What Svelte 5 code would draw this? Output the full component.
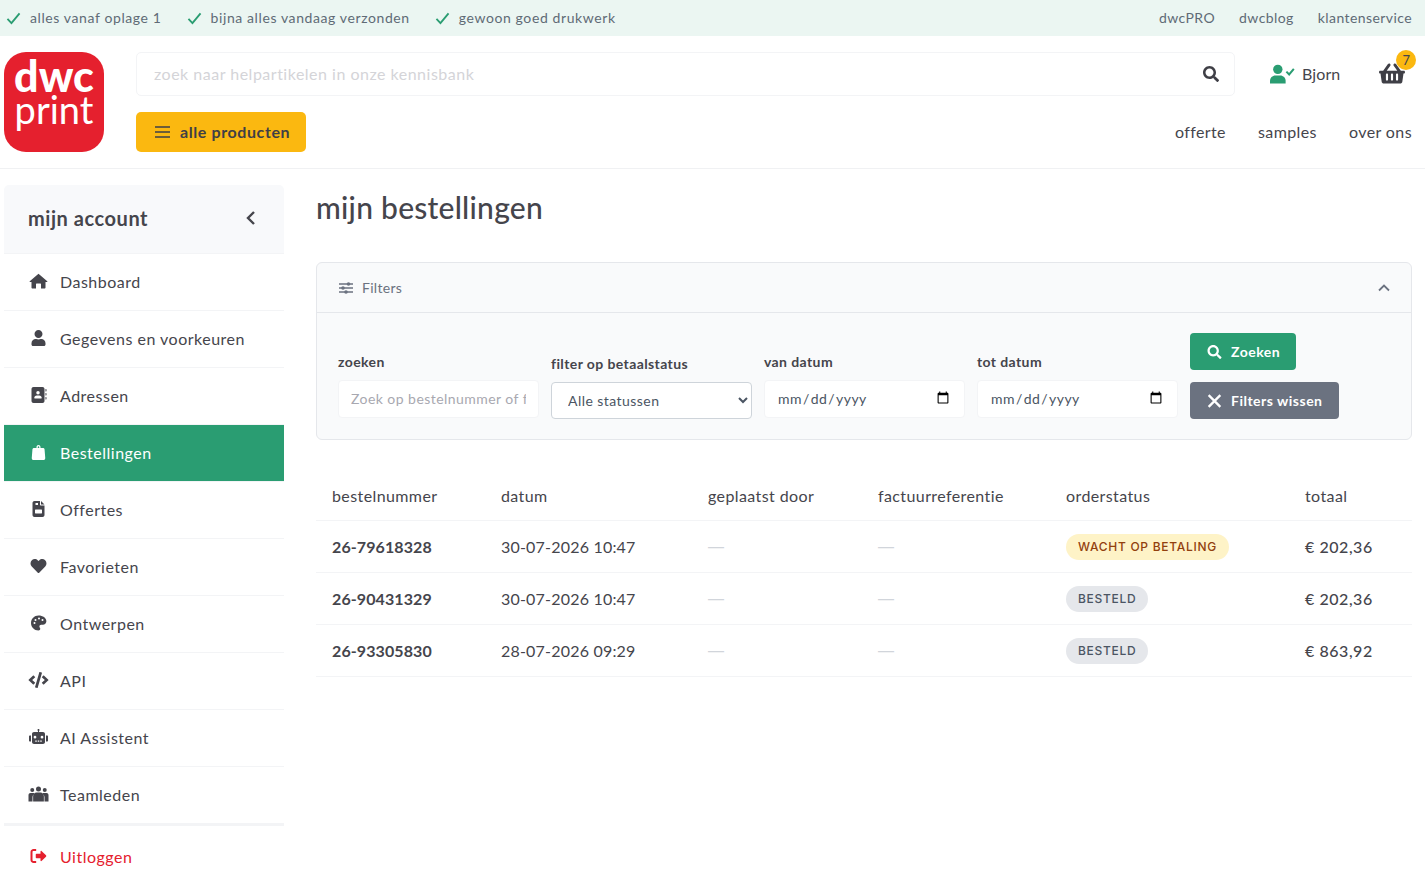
<script>
  const topLeft = ["alles vanaf oplage 1", "bijna alles vandaag verzonden", "gewoon goed drukwerk"];
  const topRight = ["dwcPRO", "dwcblog", "klantenservice"];

  const icons = {
    home: ["0 0 576 512", "M288 24 L8 264 c-10 9 -4 24 10 24 h46 v176 c0 18 14 32 32 32 h112 V352 c0 -10 8 -18 18 -18 h124 c10 0 18 8 18 18 v144 h112 c18 0 32 -14 32 -32 V288 h46 c14 0 20 -15 10 -24 L288 24z"],
    user: ["0 0 448 512", "M224 256c70.7 0 128-57.3 128-128S294.7 0 224 0 96 57.3 96 128s57.3 128 128 128zm89.6 32h-16.7c-22.2 10.2-46.9 16-72.9 16s-50.6-5.8-72.9-16h-16.7C60.2 288 0 348.2 0 422.4V464c0 26.5 21.5 48 48 48h352c26.5 0 48-21.5 48-48v-41.6c0-74.2-60.2-134.4-134.4-134.4z"],
    book: ["0 0 512 512", "M96 0h288c35 0 64 29 64 64v384c0 35-29 64-64 64H96c-35 0-64-29-64-64V64C32 29 61 0 96 0zm144 128a56 56 0 1 0 0 112 56 56 0 0 0 0-112zm-40 144c-44 0-80 36-80 80 0 9 7 16 16 16h208c9 0 16-7 16-16 0-44-36-80-80-80h-80zM480 64h16c9 0 16 7 16 16v48c0 9-7 16-16 16h-16V64zm0 128h16c9 0 16 7 16 16v48c0 9-7 16-16 16h-16v-80zm0 128h16c9 0 16 7 16 16v48c0 9-7 16-16 16h-16v-80z"],
    bag: ["0 0 448 512", "M160 128V96c0-35 29-64 64-64s64 29 64 64v32h-40V96c0-13-11-24-24-24s-24 11-24 24v32h-40zm-80 0h288c26 0 48 20 50 46l22 272c3 36-25 66-60 66H68c-35 0-63-30-60-66l22-272c2-26 24-46 50-46z"],
    file: ["0 0 384 512", "M64 0h176v112c0 18 14 32 32 32h112v304c0 35-29 64-64 64H64c-35 0-64-29-64-64V64C0 29 29 0 64 0zm208 0l112 112H272V0zM96 64v64h80V64H96zm0 208c-9 0-16 7-16 16v96c0 9 7 16 16 16h192c9 0 16-7 16-16v-96c0-9-7-16-16-16H96z"],
    heart: ["0 0 512 512", "M462.3 62.6C407.5 15.9 326 24.3 275.7 76.2L256 96.5l-19.7-20.3C186.1 24.3 104.5 15.9 49.7 62.6c-62.8 53.6-66.1 149.8-9.9 207.9l193.5 199.8c12.5 12.9 32.8 12.9 45.3 0l193.5-199.8c56.3-58.1 53-154.3-9.8-207.9z"],
    palette: ["0 0 512 512", "M256 16C123 16 16 123 16 256s107 240 240 240c32 0 56-24 56-56 0-14-5-26-14-36-9-10-14-22-14-36 0-31 25-56 56-56h56c61 0 112-51 112-112C508 93 395 16 256 16zM128 288a32 32 0 1 1 0-64 32 32 0 0 1 0 64zm32-96a32 32 0 1 1 0-64 32 32 0 0 1 0 64zm112-48a32 32 0 1 1 0-64 32 32 0 0 1 0 64zm112 48a32 32 0 1 1 0-64 32 32 0 0 1 0 64z"],
    code: ["0 0 640 512", "M278.9 511.5l-61-17.7c-6.4-1.8-10-8.5-8.2-14.9L346.2 8.7c1.8-6.4 8.5-10 14.9-8.2l61 17.7c6.4 1.8 10 8.5 8.2 14.9L293.8 503.3c-1.9 6.4-8.5 10.1-14.9 8.2zm-114-112.2l43.5-46.4c4.6-4.9 4.3-12.7-.8-17.2L117 256l90.6-79.7c5.1-4.5 5.5-12.3.8-17.2l-43.5-46.4c-4.5-4.8-12.1-5.1-17-.5L3.8 247.2c-5.1 4.7-5.1 12.8 0 17.5l144.1 135.1c4.9 4.6 12.5 4.4 17-.5zm327.2.6l144.1-135.1c5.1-4.7 5.1-12.8 0-17.5L492.1 112.1c-4.8-4.5-12.4-4.3-17 .5L431.6 159c-4.6 4.9-4.3 12.7.8 17.2L523 256l-90.6 79.7c-5.1 4.5-5.5 12.3-.8 17.2l43.5 46.4c4.5 4.9 12.1 5.1 17 .6z"],
    robot: ["0 0 640 512", "M320 0c18 0 32 14 32 32 0 12-6 22-16 28v36h128c35 0 64 29 64 64v256c0 35-29 64-64 64H176c-35 0-64-29-64-64V160c0-35 29-64 64-64h128V60c-10-6-16-16-16-28 0-18 14-32 32-32zM208 216a44 44 0 1 0 0 88 44 44 0 0 0 0-88zm224 0a44 44 0 1 0 0 88 44 44 0 0 0 0-88zM216 368v40h48v-40h-48zm80 0v40h48v-40h-48zm80 0v40h48v-40h-48zM80 208v192H48c-18 0-32-14-32-32V240c0-18 14-32 32-32h32zm480 0h32c18 0 32 14 32 32v128c0 18-14 32-32 32h-32V208z"],
    users: ["0 0 640 512", "M320 16a80 80 0 1 1 0 160 80 80 0 0 1 0-160zM120 64a64 64 0 1 1 0 128 64 64 0 0 1 0-128zm400 0a64 64 0 1 1 0 128 64 64 0 0 1 0-128zM64 224h88c17 0 33 5 46 13-42 25-70 70-70 123v136H0V288c0-35 29-64 64-64zm424 0h88c35 0 64 29 64 64v208H512V360c0-53-28-98-70-123 13-8 29-13 46-13zM260 208h120c62 0 112 50 112 112v176H148V320c0-62 50-112 112-112z"],
    logout: ["0 0 512 512", "M352 96l144 136c14 13 14 35 0 48L352 416c-10 9-32 4-32-16v-72H192c-13 0-24-11-24-24v-96c0-13 11-24 24-24h128v-72c0-20 22-25 32-16zM96 32h72c9 0 16 7 16 16v32c0 9-7 16-16 16H96c-18 0-32 14-32 32v256c0 18 14 32 32 32h72c9 0 16 7 16 16v32c0 9-7 16-16 16H96c-53 0-96-43-96-96V128c0-53 43-96 96-96z"],
    search: ["0 0 512 512", "M505 442.7L405.3 343c-4.5-4.5-10.6-7-17-7H372c27.6-35.3 44-79.7 44-128C416 93.1 322.9 0 208 0S0 93.1 0 208s93.1 208 208 208c48.3 0 92.7-16.4 128-44v16.3c0 6.4 2.5 12.5 7 17l99.7 99.7c9.4 9.4 24.6 9.4 33.9 0l28.3-28.3c9.4-9.4 9.4-24.6.1-34zM208 336c-70.7 0-128-57.2-128-128 0-70.7 57.2-128 128-128 70.7 0 128 57.2 128 128 0 70.7-57.2 128-128 128z"],
    basket: ["0 0 576 512", "M576 216v16c0 13.255-10.745 24-24 24h-8l-26.113 182.788C514.509 462.435 494.257 480 470.37 480H105.63c-23.887 0-44.139-17.565-47.518-41.212L32 256h-8c-13.255 0-24-10.745-24-24v-16c0-13.255 10.745-24 24-24h67.341l106.78-146.821c10.395-14.292 30.407-17.453 44.701-7.058 14.293 10.395 17.453 30.408 7.058 44.701L170.477 192h235.046L326.12 82.821c-10.395-14.292-7.234-34.306 7.059-44.701 14.291-10.395 34.306-7.235 44.701 7.058L484.659 192H552c13.255 0 24 10.745 24 24zM312 392V280c0-13.255-10.745-24-24-24s-24 10.745-24 24v112c0 13.255 10.745 24 24 24s24-10.745 24-24zm112 0V280c0-13.255-10.745-24-24-24s-24 10.745-24 24v112c0 13.255 10.745 24 24 24s24-10.745 24-24zm-224 0V280c0-13.255-10.745-24-24-24s-24 10.745-24 24v112c0 13.255 10.745 24 24 24s24-10.745 24-24z"],
  };

  const menu = [
    { label: "Dashboard", icon: "home" },
    { label: "Gegevens en voorkeuren", icon: "user" },
    { label: "Adressen", icon: "book" },
    { label: "Bestellingen", icon: "bag", active: true },
    { label: "Offertes", icon: "file" },
    { label: "Favorieten", icon: "heart" },
    { label: "Ontwerpen", icon: "palette" },
    { label: "API", icon: "code" },
    { label: "AI Assistent", icon: "robot" },
    { label: "Teamleden", icon: "users" },
  ];

  const orders = [
    { nr: "26-79618328", date: "30-07-2026 10:47", status: "WACHT OP BETALING", wait: true, total: "€ 202,36" },
    { nr: "26-90431329", date: "30-07-2026 10:47", status: "BESTELD", total: "€ 202,36" },
    { nr: "26-93305830", date: "28-07-2026 09:29", status: "BESTELD", total: "€ 863,92" },
  ];
</script>

{#snippet icon(name, cls)}
  <svg class={cls} viewBox={icons[name][0]} aria-hidden="true"><path fill="currentColor" fill-rule="evenodd" d={icons[name][1]} /></svg>
{/snippet}

{#snippet check()}
  <svg class="check" viewBox="0 0 16 14" aria-hidden="true"><path d="M1.5 7.5 L5.8 12 L14.5 1.5" fill="none" stroke="currentColor" stroke-width="2" /></svg>
{/snippet}

<div class="page">
  <div class="topbar">
    <ul class="usps">
      {#each topLeft as usp}
        <li>{@render check()}<span>{usp}</span></li>
      {/each}
    </ul>
    <nav class="toplinks">
      {#each topRight as link}<span>{link}</span>{/each}
    </nav>
  </div>

  <header class="header">
    <div class="logo">
      <span class="logo__dwc">dwc</span>
      <span class="logo__print">print</span>
    </div>
    <div class="header__body">
      <div class="header__row">
        <div class="search">
          <input type="text" placeholder="zoek naar helpartikelen in onze kennisbank" />
          {@render icon("search", "search__icon")}
        </div>
        <div class="account">
          <svg class="account__icon" viewBox="0 0 32 24" aria-hidden="true">
            <circle cx="10" cy="6" r="6" fill="#2a9d72" />
            <path d="M0 24v-3c0-4 3-7 7-7h6c4 0 7 3 7 7v3z" fill="#2a9d72" />
            <path d="M21 9l3.5 3.5 6-7" fill="none" stroke="#2a9d72" stroke-width="2.6" />
          </svg>
          <span>Bjorn</span>
        </div>
        <div class="cart">
          {@render icon("basket", "cart__icon")}
          <span class="cart__badge">7</span>
        </div>
      </div>
      <div class="header__row header__row--nav">
        <button class="products">
          <svg class="products__icon" viewBox="0 0 15 12" aria-hidden="true"><path d="M0 1h15M0 6h15M0 11h15" stroke="currentColor" stroke-width="1.5" /></svg>
          alle producten
        </button>
        <nav class="mainnav">
          <span>offerte</span><span>samples</span><span>over ons</span>
        </nav>
      </div>
    </div>
  </header>

  <div class="layout">
    <aside class="sidebar">
      <div class="sidebar__head">
        <h2>mijn account</h2>
        <svg class="sidebar__back" viewBox="0 0 10 16" aria-hidden="true"><path d="M8 2 L2 8 L8 14" fill="none" stroke="currentColor" stroke-width="2.4" /></svg>
      </div>
      <ul class="menu">
        {#each menu as item}
          <li class="menu__item" class:menu__item--active={item.active}>
            <span class="menu__icon">{@render icon(item.icon, "menu__svg")}</span>
            {item.label}
          </li>
        {/each}
      </ul>
      <div class="logout">
        <span class="menu__icon">{@render icon("logout", "menu__svg")}</span>
        Uitloggen
      </div>
    </aside>

    <main class="main">
      <h1>mijn bestellingen</h1>

      <section class="filters">
        <div class="filters__head">
          <svg class="filters__icon" viewBox="0 0 14 12" aria-hidden="true">
            <path d="M0 2h14M0 6h14M0 10h14" stroke="currentColor" stroke-width="1.4" />
            <circle cx="9.5" cy="2" r="1.8" fill="currentColor" /><circle cx="4" cy="6" r="1.8" fill="currentColor" /><circle cx="7" cy="10" r="1.8" fill="currentColor" />
          </svg>
          <span>Filters</span>
          <svg class="filters__toggle" viewBox="0 0 12 8" aria-hidden="true"><path d="M1 6.5 L6 1.5 L11 6.5" fill="none" stroke="currentColor" stroke-width="1.8" /></svg>
        </div>
        <form class="filters__form">
          <label class="field">
            <span class="field__label">zoeken</span>
            <input class="field__input" type="text" placeholder="Zoek op bestelnummer of factuurreferentie" />
          </label>
          <label class="field field--select">
            <span class="field__label">filter op betaalstatus</span>
            <select class="field__select"><option>Alle statussen</option></select>
          </label>
          <label class="field">
            <span class="field__label">van datum</span>
            <input class="field__input field__input--date" type="date" />
          </label>
          <label class="field">
            <span class="field__label">tot datum</span>
            <input class="field__input field__input--date" type="date" />
          </label>
          <div class="filters__actions">
            <button type="button" class="btn btn--green">{@render icon("search", "btn__icon")}Zoeken</button>
            <button type="button" class="btn btn--grey">
              <svg class="btn__icon" viewBox="0 0 12 12" aria-hidden="true"><path d="M1 1l10 10M11 1L1 11" stroke="currentColor" stroke-width="2" /></svg>
              Filters wissen
            </button>
          </div>
        </form>
      </section>

      <table class="orders">
        <colgroup>
          <col style="width:169px" /><col style="width:207px" /><col style="width:170px" /><col style="width:188px" /><col style="width:239px" /><col />
        </colgroup>
        <thead>
          <tr><th>bestelnummer</th><th>datum</th><th>geplaatst door</th><th>factuurreferentie</th><th>orderstatus</th><th>totaal</th></tr>
        </thead>
        <tbody>
          {#each orders as order}
            <tr>
              <td class="orders__nr">{order.nr}</td>
              <td>{order.date}</td>
              <td class="orders__none">—</td>
              <td class="orders__none">—</td>
              <td><span class="badge" class:badge--wait={order.wait}>{order.status}</span></td>
              <td class="orders__total">{order.total}</td>
            </tr>
          {/each}
        </tbody>
      </table>
    </main>
  </div>
</div>

<style>
  :global(body) {
    margin: 0;
    background: #fff;
    color: #45454c;
    font-family: "Lato", "Liberation Sans", sans-serif;
  }

  ul {
    list-style: none;
    margin: 0;
    padding: 0;
  }

  .topbar {
    display: flex;
    justify-content: space-between;
    align-items: center;
    box-sizing: border-box;
    height: 36px;
    padding: 0 13px 2px 6px;
    background: #ebf6f2;
    font-size: 14px;
    color: #5f6b76;
    letter-spacing: 0.6px;
  }

  .usps {
    display: flex;
    gap: 25px;
  }

  .usps li {
    display: flex;
    align-items: center;
    gap: 9px;
  }

  .check {
    width: 15px;
    height: 13px;
    margin-top: 2px;
    color: #2a9d72;
  }

  .toplinks {
    display: flex;
    gap: 24px;
    letter-spacing: 0.42px;
  }

  .header {
    display: flex;
    gap: 32px;
    padding: 16px 13px 16px 4px;
    border-bottom: 1px solid #f0f1f3;
  }

  .logo {
    display: flex;
    flex-direction: column;
    align-items: center;
    justify-content: center;
    flex: none;
    box-sizing: border-box;
    width: 100px;
    height: 100px;
    padding-bottom: 20px;
    border-radius: 22px;
    background: #e5202e;
    color: #fff;
  }

  .logo__dwc {
    font-size: 43px;
    font-weight: 900;
    line-height: 34px;
  }

  .logo__print {
    font-size: 38px;
    font-weight: 400;
    line-height: 32px;
  }

  .header__body {
    flex: 1;
    display: flex;
    flex-direction: column;
    gap: 16px;
  }

  .header__row {
    display: flex;
    align-items: center;
    height: 44px;
  }

  .header__row--nav {
    justify-content: space-between;
    height: 40px;
  }

  .search {
    display: flex;
    align-items: center;
    flex: none;
    width: 1099px;
    height: 44px;
    box-sizing: border-box;
    border: 1px solid #f3f4f6;
    border-radius: 5px;
    padding: 0 15px 0 17px;
  }

  .search input {
    flex: 1;
    border: 0;
    outline: 0;
    padding: 0 0 2px;
    font: inherit;
    font-size: 16px;
    letter-spacing: 0.5px;
  }

  .search input::placeholder {
    color: #d4d4d8;
  }

  :global(.search__icon) {
    width: 16px;
    height: 16px;
    color: #3f3f46;
  }

  .account {
    display: flex;
    align-items: center;
    gap: 7px;
    margin-left: 35px;
    font-size: 16px;
    letter-spacing: 0.1px;
  }

  .account span {
    padding-bottom: 2px;
  }

  .account__icon {
    width: 25px;
    height: 20px;
  }

  .cart {
    position: relative;
    margin-left: 39px;
    height: 24px;
  }

  :global(.cart__icon) {
    display: block;
    width: 26px;
    height: 23px;
    color: #3f3f46;
  }

  .cart__badge {
    position: absolute;
    top: -12px;
    right: -11px;
    width: 20px;
    height: 20px;
    border-radius: 50%;
    background: #fbb810;
    font-size: 13px;
    line-height: 20px;
    text-align: center;
  }

  .products {
    display: flex;
    align-items: center;
    gap: 10px;
    width: 170px;
    height: 40px;
    padding: 0 0 2px 19px;
    border: 0;
    border-radius: 5px;
    background: #fbb810;
    color: #3f3f46;
    font: inherit;
    font-size: 16px;
    font-weight: 700;
    letter-spacing: 0.6px;
  }

  .products__icon {
    width: 15px;
    height: 12px;
    margin-top: 2px;
  }

  .mainnav {
    display: flex;
    gap: 32px;
    padding-bottom: 2px;
    font-size: 16px;
    letter-spacing: 0.4px;
  }

  .layout {
    display: flex;
    gap: 32px;
    padding: 16px 13px 0 4px;
  }

  .sidebar {
    flex: none;
    width: 280px;
  }

  .sidebar__head {
    display: flex;
    align-items: center;
    justify-content: space-between;
    box-sizing: border-box;
    height: 69px;
    padding: 0 28px 2px 24px;
    background: #f8f9fb;
    border-radius: 5px 5px 0 0;
    border-bottom: 1px solid #f3f4f6;
  }

  .sidebar__head h2 {
    margin: 0;
    font-size: 20px;
    font-weight: 700;
    letter-spacing: 0.55px;
  }

  .sidebar__back {
    width: 10px;
    height: 16px;
  }

  .menu__item {
    display: flex;
    align-items: center;
    box-sizing: border-box;
    height: 57px;
    padding: 0 0 2px 24px;
    border-bottom: 1px solid #f3f4f6;
    font-size: 16px;
    letter-spacing: 0.5px;
  }

  .menu__item--active {
    background: #2a9d72;
    color: #fff;
  }

  .menu__icon {
    display: flex;
    justify-content: center;
    flex: none;
    width: 21px;
    margin-right: 11px;
  }

  :global(.menu__svg) {
    width: 21px;
    height: 16px;
  }

  .logout {
    display: flex;
    align-items: center;
    height: 60px;
    padding-left: 24px;
    border-top: 2px solid #f3f4f6;
    color: #e5202e;
    font-size: 16px;
    letter-spacing: 0.5px;
  }

  .main {
    flex: 1;
    min-width: 0;
  }

  h1 {
    margin: 0 0 32px;
    font-size: 30px;
    line-height: 45px;
    font-weight: 500;
    letter-spacing: 0.25px;
  }

  .filters {
    border: 1px solid #e5e7eb;
    border-radius: 6px;
    background: #f9fafb;
  }

  .filters__head {
    display: flex;
    align-items: center;
    box-sizing: border-box;
    height: 50px;
    padding: 0 21px 0 22px;
    border-bottom: 1px solid #e5e7eb;
    font-size: 14px;
    color: #6b7280;
    letter-spacing: 0.3px;
  }

  .filters__icon {
    width: 14px;
    height: 12px;
    margin-right: 9px;
  }

  .filters__toggle {
    width: 12px;
    height: 8px;
    margin-left: auto;
  }

  .filters__form {
    display: flex;
    align-items: flex-end;
    gap: 12.25px;
    padding: 20px 21px;
  }

  .field {
    display: flex;
    flex-direction: column;
    width: 200.75px;
  }

  .field__label {
    margin-bottom: 10px;
    font-size: 14px;
    font-weight: 700;
    letter-spacing: 0.4px;
  }

  .field__input,
  .field__select {
    box-sizing: border-box;
    width: 100%;
    height: 38px;
    margin-bottom: 1px;
    border: 1px solid #f3f4f6;
    border-radius: 4px;
    background: #fff;
    color: #4b5563;
    font: inherit;
    font-size: 14px;
    letter-spacing: 0.45px;
    padding: 0 12px 2px;
  }

  .field__input::placeholder {
    color: #a8a8b0;
  }

  .field__select {
    height: 37px;
    margin-bottom: 0;
    border-color: #ced4da;
    padding: 0 12px;
    letter-spacing: 0.45px;
  }

  .filters__actions {
    display: flex;
    flex-direction: column;
    align-items: flex-start;
    gap: 12px;
  }

  .btn {
    display: flex;
    align-items: center;
    gap: 9px;
    height: 37px;
    padding: 0 16px 0 17px;
    border: 0;
    border-radius: 4px;
    color: #fff;
    font: inherit;
    font-size: 14px;
    font-weight: 700;
    letter-spacing: 0.5px;
  }

  .btn--green {
    background: #2a9d72;
  }

  .btn--grey {
    background: #6b7280;
  }

  :global(.btn__icon) {
    width: 15px;
    height: 14px;
  }

  .orders {
    width: 100%;
    margin-top: 32px;
    border-collapse: collapse;
    table-layout: fixed;
    font-size: 16px;
    letter-spacing: 0.4px;
  }

  .orders th {
    height: 46px;
    padding: 0 16px 2px;
    text-align: left;
    font-weight: 400;
    border-bottom: 1px solid #f3f4f6;
  }

  .orders td {
    height: 51px;
    padding: 0 16px;
    border-bottom: 1px solid #f3f4f6;
    letter-spacing: 0.2px;
  }

  .orders td.orders__nr {
    font-weight: 700;
    letter-spacing: 0.1px;
  }

  .orders__none {
    color: #d1d5db;
    font-family: "Liberation Sans", sans-serif;
  }

  .orders td.orders__total {
    font-weight: 500;
    letter-spacing: 0.55px;
  }

  .badge {
    display: inline-block;
    padding: 0 12px;
    height: 26px;
    line-height: 26px;
    border-radius: 13px;
    background: #e5e7eb;
    color: #4b5563;
    font-family: "Inter", sans-serif;
    font-size: 12px;
    font-weight: 500;
    letter-spacing: 0.72px;
  }

  .badge--wait {
    background: #fef3c7;
    color: #92400e;
  }
</style>
